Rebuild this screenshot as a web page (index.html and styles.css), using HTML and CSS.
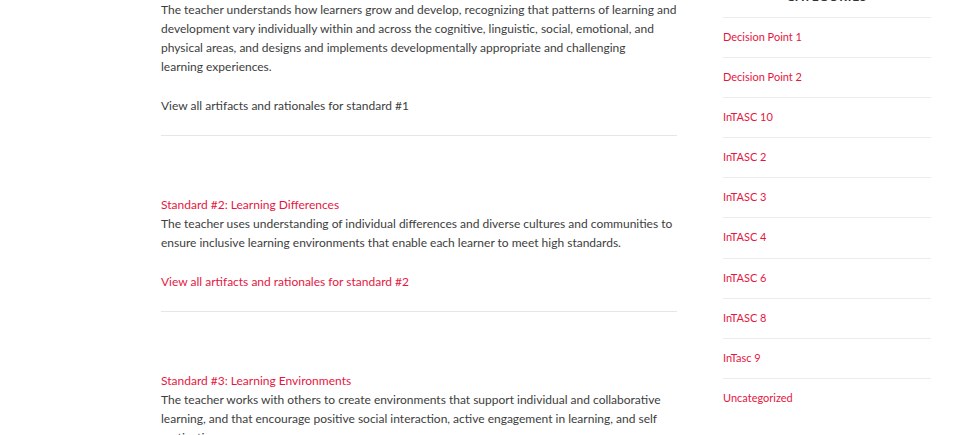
FILE: index.html
```html
<!DOCTYPE html>
<html lang="en">
<head>
  <meta charset="UTF-8">
  <meta name="viewport" content="width=device-width, initial-scale=1.0">
  <title>InTASC Standards</title>
  <link rel="stylesheet" href="styles.css">
</head>
<body>
  <div class="page">
    <main class="content">
      <section class="standard">
        <a class="standard-title" href="#">Standard #1: Learner Development</a>
        <p>The teacher understands how learners grow and develop, recognizing that patterns of learning and development vary individually within and across the cognitive, linguistic, social, emotional, and physical areas, and designs and implements developmentally appropriate and challenging learning&nbsp;experiences.</p>
        <p class="view-all"><a class="visited" href="#">View all artifacts and rationales for standard #1</a></p>
      </section>

      <section class="standard">
        <a class="standard-title" href="#">Standard #2: Learning Differences</a>
        <p>The teacher uses understanding of individual differences and diverse cultures and communities to ensure inclusive learning environments that enable each learner to meet high standards.</p>
        <p class="view-all"><a href="#">View all artifacts and rationales for standard #2</a></p>
      </section>

      <section class="standard">
        <a class="standard-title" href="#">Standard #3: Learning Environments</a>
        <p>The teacher works with others to create environments that support individual and collaborative learning, and that encourage positive social interaction, active engagement in learning, and self motivation.</p>
        <p class="view-all"><a href="#">View all artifacts and rationales for standard #3</a></p>
      </section>
    </main>

    <aside class="sidebar">
      <h2 class="widget-title">Categories</h2>
      <ul class="cat-list">
        <li><a href="#">Decision Point 1</a></li>
        <li><a href="#">Decision Point 2</a></li>
        <li><a href="#">InTASC 10</a></li>
        <li><a href="#">InTASC 2</a></li>
        <li><a href="#">InTASC 3</a></li>
        <li><a href="#">InTASC 4</a></li>
        <li><a href="#">InTASC 6</a></li>
        <li><a href="#">InTASC 8</a></li>
        <li><a href="#">InTasc 9</a></li>
        <li><a href="#">Uncategorized</a></li>
      </ul>
    </aside>
  </div>
</body>
</html>
```
FILE: styles.css
```css
body {
  margin: 0;
  font-family: Lato, "Liberation Sans", sans-serif;
  color: #3d3d3d;
  background: #fff;
  overflow: hidden;
}
a {
  color: #e5173f;
  text-decoration: none;
}
.page {
  display: grid;
  grid-template-columns: 516px 208px;
  column-gap: 46px;
  padding-left: 161px;
  margin-top: -19px;
}
.content {
  font-size: 12px;
  line-height: 19px;
}
.standard {
  padding: 59px 0 20.5px;
  border-bottom: 1px solid #e6e6e6;
}
.standard:first-child {
  padding-top: 0;
}
.standard-title {
  display: block;
}
.standard p {
  margin: 0;
}
.standard .view-all {
  margin-top: 19.5px;
}
.view-all a.visited {
  color: #3d3d3d;
}
.sidebar {
  font-size: 11px;
}
.widget-title {
  margin: 6px 0 10px;
  font-size: 12px;
  line-height: 20px;
  font-weight: 700;
  letter-spacing: 0.8px;
  text-transform: uppercase;
  text-align: center;
  color: #333;
}
.cat-list {
  list-style: none;
  margin: 0;
  padding: 0;
}
.cat-list li {
  border-top: 1px solid #ececec;
  padding: 11px 0 13.1px;
  line-height: 15px;
}
```
